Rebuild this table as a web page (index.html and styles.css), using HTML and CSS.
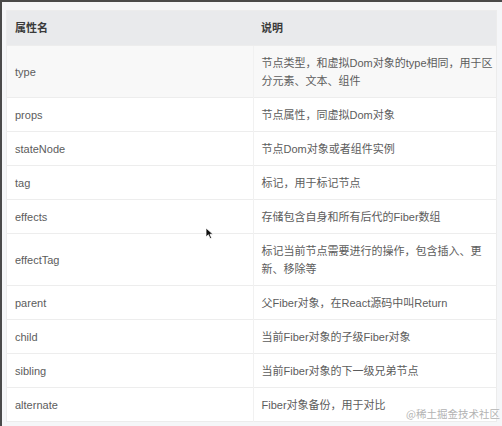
FILE: index.html
```html
<!DOCTYPE html>
<html lang="zh">
<head>
<meta charset="utf-8">
<link rel="stylesheet" href="styles.css">
</head>
<body>
<div class="frame">
  <table class="props-table">
    <thead>
      <tr><th class="c-name">属性名</th><th>说明</th></tr>
    </thead>
    <tbody>
      <tr class="hl"><td>type</td><td>节点类型，和虚拟Dom对象的type相同，用于区<br>分元素、文本、组件</td></tr>
      <tr><td>props</td><td>节点属性，同虚拟Dom对象</td></tr>
      <tr><td>stateNode</td><td>节点Dom对象或者组件实例</td></tr>
      <tr><td>tag</td><td>标记，用于标记节点</td></tr>
      <tr><td>effects</td><td>存储包含自身和所有后代的Fiber数组</td></tr>
      <tr><td>effectTag</td><td>标记当前节点需要进行的操作，包含插入、更<br>新、移除等</td></tr>
      <tr><td>parent</td><td>父Fiber对象，在React源码中叫Return</td></tr>
      <tr><td>child</td><td>当前Fiber对象的子级Fiber对象</td></tr>
      <tr><td>sibling</td><td>当前Fiber对象的下一级兄弟节点</td></tr>
      <tr><td>alternate</td><td>Fiber对象备份，用于对比</td></tr>
    </tbody>
  </table>
  <svg class="cursor" width="9" height="13" viewBox="0 0 9 13">
    <path d="M1 1 L1 10 L3.4 7.8 L5 11.6 L6.6 10.9 L5 7.3 L8 7.2 Z" fill="#111" stroke="#fff" stroke-width="0.8"/>
  </svg>
  <div class="watermark">@稀土掘金技术社区</div>
</div>
</body>
</html>
```
FILE: styles.css
```css
html, body {
  margin: 0;
  padding: 0;
}
body {
  background: #f5f6f8;
  font-family: "Liberation Sans", "Noto Sans CJK SC", sans-serif;
  overflow: hidden;
}
.frame {
  position: relative;
  height: 426px;
  box-sizing: border-box;
  border-top: 2px solid #4a4a4a;
  border-left: 2px solid #4a4a4a;
  padding: 8px 5px 0 4px;
}
.props-table {
  width: 491px;
  table-layout: fixed;
  border-collapse: collapse;
  background: #fff;
  font-size: 11px;
  line-height: 18px;
  color: #5c5c5c;
  border: 1px solid #ececec;
}
.props-table th {
  background: #e9eaec;
  color: #3a3a3a;
  font-weight: bold;
  text-align: left;
  padding: 8px 8px 8px;
}
.props-table td {
  padding: 8px 8px 7px;
  border-top: 1px solid #ededed;
  vertical-align: middle;
  white-space: nowrap;
}
.props-table .c-name {
  width: 230px;
}
.props-table td + td {
  border-left: 1px solid #f1f1f1;
}
.props-table tr.hl td {
  background: #f8f8f8;
}
.cursor {
  position: absolute;
  left: 203px;
  top: 225px;
}
.watermark {
  position: absolute;
  left: 404px;
  top: 405px;
  font-size: 10.5px;
  line-height: 14px;
  white-space: nowrap;
  color: #b3b3b3;
  font-family: "Noto Sans CJK SC", sans-serif;
  text-shadow: 0 0 2px #fff;
}
```
